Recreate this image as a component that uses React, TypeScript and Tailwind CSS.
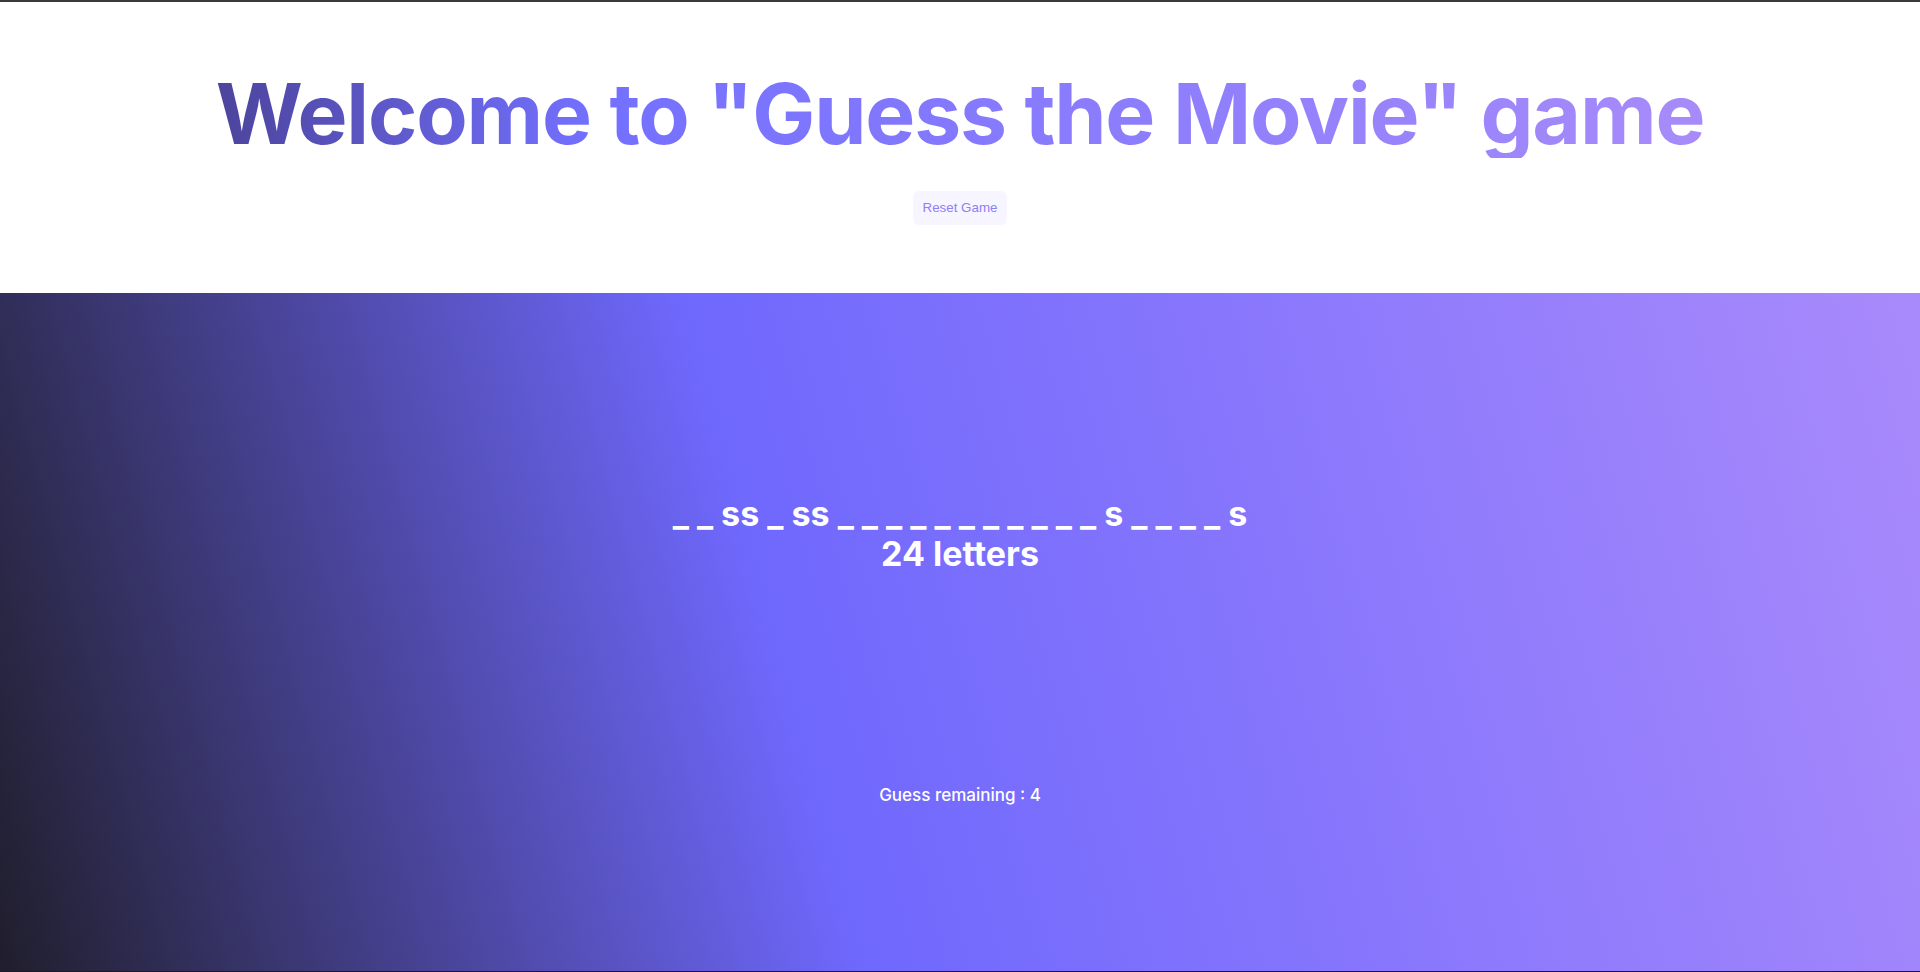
import React from "react";

const hangman = "_ _ ss _ ss _ _ _ _ _ _ _ _ _ _ _ s _ _ _ _ s";

export default function App() {
  return (
    <div className="flex h-[972px] w-full flex-col overflow-hidden border-t-2 border-b border-t-[#3a3a3a] border-b-[#1c1a2a] bg-white font-['Inter','Noto_Sans',sans-serif]">
      <header className="flex h-[291px] shrink-0 flex-col items-center pt-[68px]">
        <h1 className="whitespace-nowrap bg-[linear-gradient(to_right,#4c449c_0%,#7370ff_25%,#a78bfa_100%)] bg-clip-text text-[84px] leading-[88px] font-bold tracking-[-1.2px] text-transparent">
          Welcome to "Guess the Movie" game
        </h1>
        <button className="mt-[33px] h-[34px] rounded-md bg-[#f7f5ff] px-[10px] font-['Liberation_Sans',Arial,sans-serif] text-[13.33px] text-[#8d80f7]">
          Reset Game
        </button>
      </header>
      <main className="flex flex-1 flex-col items-center bg-[linear-gradient(75deg,#201e2c_0%,#6f68fd_41%,#a98afb_100%)] pt-[201px] text-white">
        <div className="flex flex-col items-center text-[34px] leading-[40px] font-bold">
          <div className="whitespace-pre">{hangman}</div>
          <div>24 letters</div>
        </div>
        <div className="mt-[209px] text-[17px] leading-[24px] font-medium">
          Guess remaining : 4
        </div>
      </main>
    </div>
  );
}
